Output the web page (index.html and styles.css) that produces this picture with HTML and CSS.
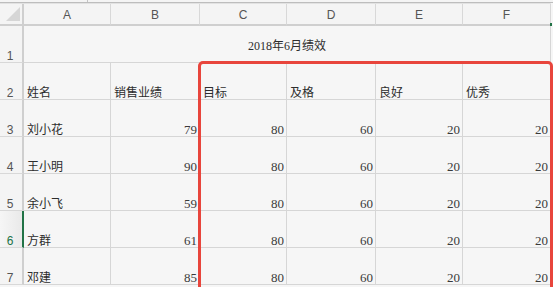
FILE: index.html
```html
<!DOCTYPE html>
<html lang="zh">
<head>
<meta charset="utf-8">
<link rel="stylesheet" href="styles.css">
</head>
<body>
<div class="topbar"><span class="topbar-div"></span></div>
<div class="sheet">
  <div class="corner"><span class="tri"></span></div>
  <div class="colh">A</div><div class="colh">B</div><div class="colh">C</div><div class="colh">D</div><div class="colh">E</div><div class="colh last">F</div>

  <div class="rowh">1</div>
  <div class="cell title">2018年6月绩效</div>

  <div class="rowh">2</div>
  <div class="cell">姓名</div><div class="cell">销售业绩</div><div class="cell">目标</div><div class="cell">及格</div><div class="cell">良好</div><div class="cell">优秀</div>

  <div class="rowh">3</div>
  <div class="cell">刘小花</div><div class="cell num">79</div><div class="cell num">80</div><div class="cell num">60</div><div class="cell num">20</div><div class="cell num">20</div>

  <div class="rowh">4</div>
  <div class="cell">王小明</div><div class="cell num">90</div><div class="cell num">80</div><div class="cell num">60</div><div class="cell num">20</div><div class="cell num">20</div>

  <div class="rowh">5</div>
  <div class="cell">余小飞</div><div class="cell num">59</div><div class="cell num">80</div><div class="cell num">60</div><div class="cell num">20</div><div class="cell num">20</div>

  <div class="rowh active">6</div>
  <div class="cell">方群</div><div class="cell num">61</div><div class="cell num">80</div><div class="cell num">60</div><div class="cell num">20</div><div class="cell num">20</div>

  <div class="rowh">7</div>
  <div class="cell">邓建</div><div class="cell num">85</div><div class="cell num">80</div><div class="cell num">60</div><div class="cell num">20</div><div class="cell num">20</div>
</div>
<div class="highlight"></div>
</body>
</html>
```
FILE: styles.css
```css
* { box-sizing: border-box; }
html, body {
  margin: 0;
  padding: 0;
  width: 553px;
  height: 287px;
  overflow: hidden;
  background: #f6f6f6;
  font-family: "Liberation Serif", "Noto Sans CJK SC", serif;
  color: #333;
}
.topbar {
  height: 3px;
  border-bottom: 1px solid #bdbdbd;
  background: #f4f4f4;
}
.topbar-div {
  display: block;
  margin-left: 87px;
  width: 1px;
  height: 2px;
  background: #c4c4c4;
}
.sheet {
  display: grid;
  width: 551px;
  grid-template-columns: 24px 87px 89px 87px 89px 87px 88px;
  grid-template-rows: 22px repeat(7, 37px);
  border-top: 1px solid #e2e2e2;
}
.corner {
  border-right: 2px solid #cfcfcf;
  border-bottom: 2px solid #cfcfcf;
  background: #f4f4f4;
  position: relative;
}
.tri {
  position: absolute;
  right: 2px;
  bottom: 3px;
  width: 0;
  height: 0;
  border-left: 14px solid transparent;
  border-bottom: 14px solid #d6d6d6;
}
.colh {
  border-right: 1px solid #d8d8d8;
  border-bottom: 2px solid #cfcfcf;
  background: #f4f4f4;
  font-family: "Liberation Sans", "Noto Sans", sans-serif;
  font-size: 12px;
  color: #555;
  display: flex;
  align-items: center;
  justify-content: center;
  padding-top: 1px;
  position: relative;
}
.colh.last::after {
  content: "";
  position: absolute;
  right: -2px;
  bottom: -2px;
  width: 2px;
  height: 3px;
  background: #217346;
}
.rowh {
  border-right: 2px solid #cfcfcf;
  border-bottom: 1px solid #d8d8d8;
  background: #f4f4f4;
  font-family: "Liberation Sans", "Noto Sans", sans-serif;
  font-size: 12px;
  line-height: 12px;
  color: #555;
  display: flex;
  align-items: flex-end;
  justify-content: center;
  padding-bottom: 0;
  padding-right: 2px;
}
.rowh.active {
  color: #217346;
  background: linear-gradient(to right, #f6f6f6, #e9e9e9);
  border-right: 2px solid #217346;
}
.cell {
  border-right: 1px solid #d6d6d6;
  border-bottom: 1px solid #d6d6d6;
  font-size: 12px;
  line-height: 12px;
  display: flex;
  align-items: flex-end;
  padding: 0 3px 0 3px;
  white-space: nowrap;
  color: #2d2d2d;
}
.cell.num {
  justify-content: flex-end;
  font-size: 13px;
  color: #3a3a3a;
  padding-right: 2px;
}
.title {
  grid-column: 2 / 8;
  justify-content: center;
  padding-bottom: 10px;
}
.highlight {
  position: absolute;
  left: 198px;
  top: 61px;
  width: 355px;
  height: 260px;
  border: 3px solid #e8453c;
  border-radius: 5px;
  pointer-events: none;
}
```
